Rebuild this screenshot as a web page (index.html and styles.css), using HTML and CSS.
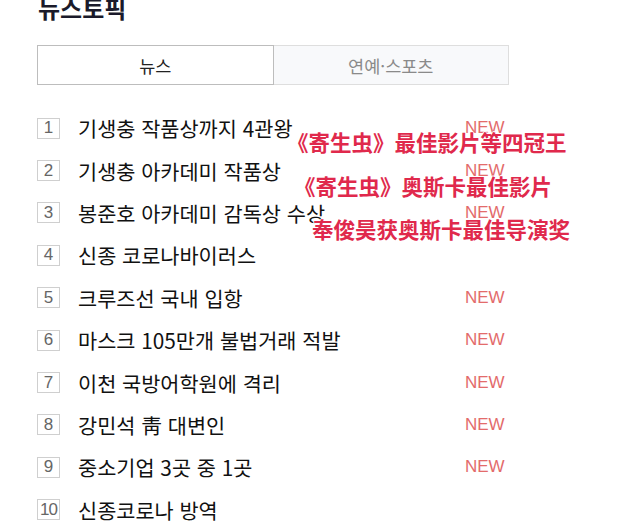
FILE: index.html
```html
<!DOCTYPE html>
<html lang="ko">
<head>
<meta charset="utf-8">
<link rel="stylesheet" href="styles.css">
</head>
<body>
<div class="page">
  <h1 class="title">뉴스토픽</h1>
  <div class="tabs">
    <div class="tab tab-on">뉴스</div>
    <div class="tab tab-off">연예·스포츠</div>
  </div>
  <ol class="list">
    <li class="row"><span class="num">1</span><span class="txt">기생충 작품상까지 4관왕</span><span class="new">NEW</span></li>
    <li class="row"><span class="num">2</span><span class="txt">기생충 아카데미 작품상</span><span class="new">NEW</span></li>
    <li class="row"><span class="num">3</span><span class="txt">봉준호 아카데미 감독상 수상</span><span class="new">NEW</span></li>
    <li class="row"><span class="num">4</span><span class="txt">신종 코로나바이러스</span></li>
    <li class="row"><span class="num">5</span><span class="txt">크루즈선 국내 입항</span><span class="new">NEW</span></li>
    <li class="row"><span class="num">6</span><span class="txt">마스크 105만개 불법거래 적발</span><span class="new">NEW</span></li>
    <li class="row"><span class="num">7</span><span class="txt">이천 국방어학원에 격리</span><span class="new">NEW</span></li>
    <li class="row"><span class="num">8</span><span class="txt">강민석 靑 대변인</span><span class="new">NEW</span></li>
    <li class="row"><span class="num">9</span><span class="txt">중소기업 3곳 중 1곳</span><span class="new">NEW</span></li>
    <li class="row"><span class="num num-wide">10</span><span class="txt">신종코로나 방역</span></li>
  </ol>
  <div class="cap cap1">《寄生虫》最佳影片等四冠王</div>
  <div class="cap cap2">《寄生虫》奥斯卡最佳影片</div>
  <div class="cap cap3">奉俊昊获奥斯卡最佳导演奖</div>
</div>
</body>
</html>
```
FILE: styles.css
```css
html, body {
  margin: 0;
  padding: 0;
  background: #fff;
  width: 640px;
  height: 530px;
  overflow: hidden;
}
.page {
  position: relative;
  display: flow-root;
  padding-left: 37px;
  font-family: "Noto Sans CJK KR", "Noto Sans", sans-serif;
  color: #111;
}
.title {
  margin: -7px 0 0 1px;
  font-size: 24px;
  line-height: 30px;
  font-weight: 700;
  color: #1a1a2a;
}
.tabs {
  display: flex;
  width: 472px;
  margin-top: 22px;
  height: 40px;
}
.tab {
  flex: 1;
  display: flex;
  align-items: center;
  justify-content: center;
  font-size: 17.5px;
  box-sizing: border-box;
}
.tab-on {
  border: 1px solid #bdbdbd;
  background: #fff;
  color: #222;
}
.tab-off {
  border: 1px solid #dedede;
  border-left: none;
  background: #f8f9fb;
  color: #8a8a8a;
}
.list {
  list-style: none;
  margin: 22px 0 0 0;
  padding: 0;
}
.row {
  display: flex;
  align-items: center;
  height: 42.4px;
}
.num {
  width: 23px;
  height: 21px;
  box-sizing: border-box;
  border: 1px solid #cfcfcf;
  display: flex;
  align-items: center;
  justify-content: center;
  font-family: "Liberation Sans", Arial, sans-serif;
  font-size: 17px;
  color: #666;
  flex: none;
}
.num-wide {
  letter-spacing: -1px;
}
.txt {
  margin-left: 18px;
  font-size: 20.8px;
  color: #111;
  width: 387px;
  white-space: nowrap;
}
.new {
  font-family: "Liberation Sans", Arial, sans-serif;
  font-size: 17px;
  color: #e36b6b;
}
.cap {
  position: absolute;
  font-family: "Noto Sans CJK SC", sans-serif;
  font-weight: 700;
  font-size: 21.5px;
  line-height: 24px;
  color: #e0294c;
  white-space: nowrap;
  text-shadow: 1px 0 0 #fff, -1px 0 0 #fff, 0 1px 0 #fff, 0 -1px 0 #fff;
}
.cap1 { left: 287px; top: 130px; }
.cap2 { left: 294px; top: 174px; }
.cap3 { left: 312px; top: 217px; }
```
